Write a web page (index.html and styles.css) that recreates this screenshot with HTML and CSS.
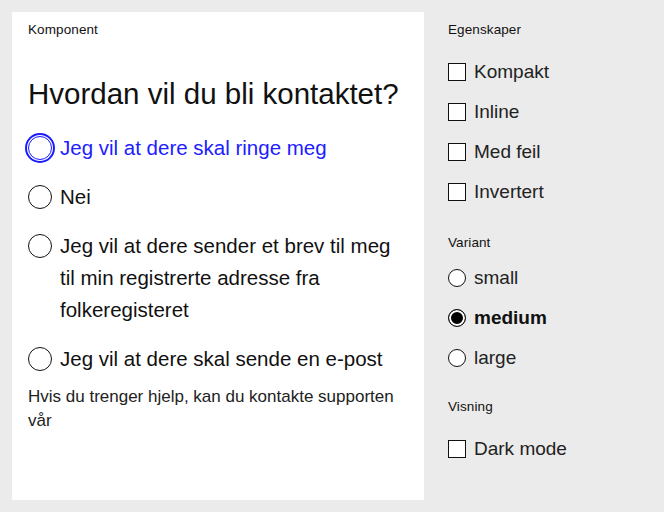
FILE: index.html
```html
<!DOCTYPE html>
<html lang="no">
<head>
<meta charset="utf-8">
<title>Komponent</title>
<link rel="stylesheet" href="styles.css">
</head>
<body>
<div class="page">
  <main class="card">
    <div class="section-label">Komponent</div>
    <div class="radio-group" role="radiogroup">
      <div class="question">Hvordan vil du bli kontaktet?</div>
      <div class="options">
        <label class="option is-focused"><span class="radio"></span><span class="option-text">Jeg vil at dere skal ringe meg</span></label>
        <label class="option"><span class="radio"></span><span class="option-text">Nei</span></label>
        <label class="option"><span class="radio"></span><span class="option-text">Jeg vil at dere sender et brev til meg til min registrerte adresse fra folkeregisteret</span></label>
        <label class="option"><span class="radio"></span><span class="option-text">Jeg vil at dere skal sende en e-post</span></label>
      </div>
      <p class="help">Hvis du trenger hjelp, kan du kontakte supporten vår</p>
    </div>
  </main>
  <aside class="sidebar">
    <section class="group">
      <div class="section-label">Egenskaper</div>
      <div class="controls">
        <label class="control"><span class="checkbox"></span>Kompakt</label>
        <label class="control"><span class="checkbox"></span>Inline</label>
        <label class="control"><span class="checkbox"></span>Med feil</label>
        <label class="control"><span class="checkbox"></span>Invertert</label>
      </div>
    </section>
    <section class="group group-variant">
      <div class="section-label">Variant</div>
      <div class="controls">
        <label class="control"><span class="small-radio"></span>small</label>
        <label class="control is-checked"><span class="small-radio"></span>medium</label>
        <label class="control"><span class="small-radio"></span>large</label>
      </div>
    </section>
    <section class="group group-view">
      <div class="section-label">Visning</div>
      <div class="controls">
        <label class="control"><span class="checkbox"></span>Dark mode</label>
      </div>
    </section>
  </aside>
</div>
</body>
</html>
```

FILE: styles.css
```css
* { box-sizing: border-box; }

html, body {
  margin: 0;
  padding: 0;
}

body {
  background: #ebebeb;
  color: #111;
  font-family: "Liberation Sans", Arial, sans-serif;
  width: 664px;
  height: 512px;
  overflow: hidden;
}

.page {
  display: flex;
  gap: 24px;
  padding: 12px;
  height: 512px;
}

.card {
  background: #fff;
  width: 412px;
  height: 488px;
  padding: 10px 20px 10px 16px;
  display: flex;
  flex-direction: column;
}

.section-label {
  font-size: 13.5px;
  line-height: 16px;
  letter-spacing: 0.1px;
}

.question {
  font-size: 29.5px;
  line-height: 36px;
  font-weight: 400;
  margin-top: 38px;
}

.options {
  display: flex;
  flex-direction: column;
  gap: 17px;
  margin-top: 20px;
}

.option {
  display: flex;
  align-items: flex-start;
  gap: 8px;
  font-size: 20.5px;
  line-height: 32px;
}

.radio {
  flex: none;
  width: 24px;
  height: 24px;
  margin-top: 4px;
  border: 1px solid #111;
  border-radius: 50%;
  background: #fff;
}

.option.is-focused {
  color: #2020ff;
}

.option.is-focused .radio {
  border-color: #1a1aff;
  box-shadow: 0 0 0 1px #fff, 0 0 0 3px #1a1aff;
}

.help {
  margin: 10px 0 0;
  font-size: 17px;
  line-height: 24px;
  color: #222;
}

.sidebar {
  display: flex;
  flex-direction: column;
  padding-top: 10px;
}

.controls {
  display: flex;
  flex-direction: column;
  margin-top: 14px;
}

.control {
  display: flex;
  align-items: center;
  gap: 8px;
  height: 40px;
  font-size: 19px;
  color: #222;
}

.checkbox {
  flex: none;
  width: 18px;
  height: 18px;
  border: 1px solid #111;
  background: #fff;
}

.small-radio {
  flex: none;
  width: 18px;
  height: 18px;
  border: 1px solid #111;
  border-radius: 50%;
  background: #fff;
}

.control.is-checked {
  font-weight: 700;
  color: #111;
}

.control.is-checked .small-radio {
  background: #000;
  box-shadow: inset 0 0 0 2px #fff;
}

.group-variant {
  margin-top: 23px;
}

.group-variant .controls {
  margin-top: 7px;
}

.group-view {
  margin-top: 21px;
}
```
